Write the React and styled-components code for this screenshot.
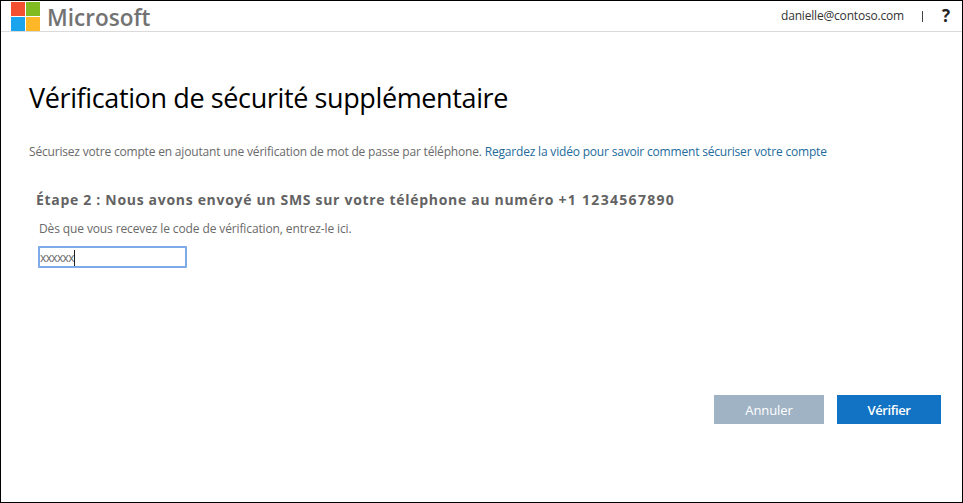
import React from "react";
import styled, { createGlobalStyle } from "styled-components";

const GlobalStyle = createGlobalStyle`
  * { box-sizing: border-box; }
  body { margin: 0; background: #fff; }
`;

const Page = styled.div`
  display: flex;
  flex-direction: column;
  width: 963px;
  height: 503px;
  border: 1px solid #000;
  background: #fff;
  color: #6a6a6a;
  font: 12px/16px "Open Sans", "Noto Sans", sans-serif;
  white-space: nowrap;
`;

const Header = styled.header`
  display: flex;
  justify-content: space-between;
  height: 31px;
  padding: 0 11px 0 10px;
  border-bottom: 1px solid #dadada;
`;

const Logo = styled.svg`
  display: block;
  width: 150px;
  height: 30px;
  overflow: visible;
`;

const Account = styled.div`
  display: flex;
  align-items: flex-start;
  padding-top: 7px;
  color: #333;
`;

const Email = styled.span`
  width: 123px;
  letter-spacing: -0.184px;
`;

const Separator = styled.span`
  width: 1px;
  height: 11px;
  margin: 3px 19px 0 18px;
  background: #444;
`;

const Help = styled.span`
  width: 9px;
  color: #222;
  font-size: 17px;
  font-weight: 700;
`;

const Main = styled.main`
  flex: 1;
  display: flex;
  flex-direction: column;
  padding: 47px 21px 0 28px;
`;

const Title = styled.h1`
  margin: 0;
  color: #000;
  font-size: 27px;
  line-height: 38px;
  font-weight: 400;
  letter-spacing: -0.38px;
`;

const Intro = styled.p`
  margin: 27px 0 0;
  letter-spacing: -0.182px;
`;

const VideoLink = styled.a`
  color: #236b9b;
  text-decoration: none;
  letter-spacing: -0.187px;
`;

const Step = styled.h2`
  margin: 30px 0 0 7px;
  color: #636363;
  font-size: 14px;
  line-height: 20px;
  font-weight: 700;
  letter-spacing: 0.69px;
`;

const PhoneNumber = styled.span`
  letter-spacing: 1.3px;
`;

const Label = styled.label`
  margin: 11px 0 0 10px;
  letter-spacing: -0.12px;
`;

const CodeField = styled.div`
  display: flex;
  align-items: center;
  width: 149px;
  height: 22px;
  margin: 9px 0 0 9px;
  padding: 1px 0 0 0;
  border: 2px solid #7eaaea;
  border-radius: 1px;
  background: #fff;
  letter-spacing: -0.65px;
`;

const Caret = styled.span`
  width: 1px;
  height: 16px;
  margin-left: 0.4px;
  background: #222;
`;

const Actions = styled.div`
  display: flex;
  justify-content: flex-end;
  gap: 13px;
  margin-top: 127px;
`;

const Button = styled.button`
  width: ${(p) => (p.$primary ? "104px" : "110px")};
  height: 29px;
  padding: 1px 0 0;
  border: 0;
  background: ${(p) => (p.$primary ? "#1272c3" : "#9fb3c4")};
  color: #fff;
  font: ${(p) => (p.$primary ? 600 : 400)} 13px/18px "Open Sans", "Noto Sans", sans-serif;
  letter-spacing: ${(p) => (p.$primary ? "-0.4px" : "-0.1px")};
`;

export default function App() {
  return (
    <>
      <GlobalStyle />
      <Page>
        <Header>
          <Logo viewBox="0 0 150 30" aria-label="Microsoft">
            <rect x="0" y="1" width="14" height="14" fill="#f25030" />
            <rect x="15" y="1" width="14" height="14" fill="#80bb21" />
            <rect x="0" y="16" width="14" height="14" fill="#1ba4ee" />
            <rect x="15" y="16" width="14" height="14" fill="#feb827" />
            <text
              x="36"
              y="25"
              fill="#737373"
              fontFamily="Open Sans, Noto Sans, sans-serif"
              fontSize="24"
              fontWeight="600"
              textLength="103.5"
              lengthAdjust="spacingAndGlyphs"
            >
              Microsoft
            </text>
          </Logo>
          <Account>
            <Email>danielle@contoso.com</Email>
            <Separator />
            <Help>?</Help>
          </Account>
        </Header>
        <Main>
          <Title>Vérification de sécurité supplémentaire</Title>
          <Intro>
            Sécurisez votre compte en ajoutant une vérification de mot de passe par téléphone.{" "}
            <VideoLink>Regardez la vidéo pour savoir comment sécuriser votre compte</VideoLink>
          </Intro>
          <Step>
            Étape 2 : Nous avons envoyé un SMS sur votre téléphone au numéro{" "}
            <PhoneNumber>+1 1234567890</PhoneNumber>
          </Step>
          <Label>Dès que vous recevez le code de vérification, entrez-le ici.</Label>
          <CodeField>
            xxxxxx
            <Caret />
          </CodeField>
          <Actions>
            <Button>Annuler</Button>
            <Button $primary>Vérifier</Button>
          </Actions>
        </Main>
      </Page>
    </>
  );
}
